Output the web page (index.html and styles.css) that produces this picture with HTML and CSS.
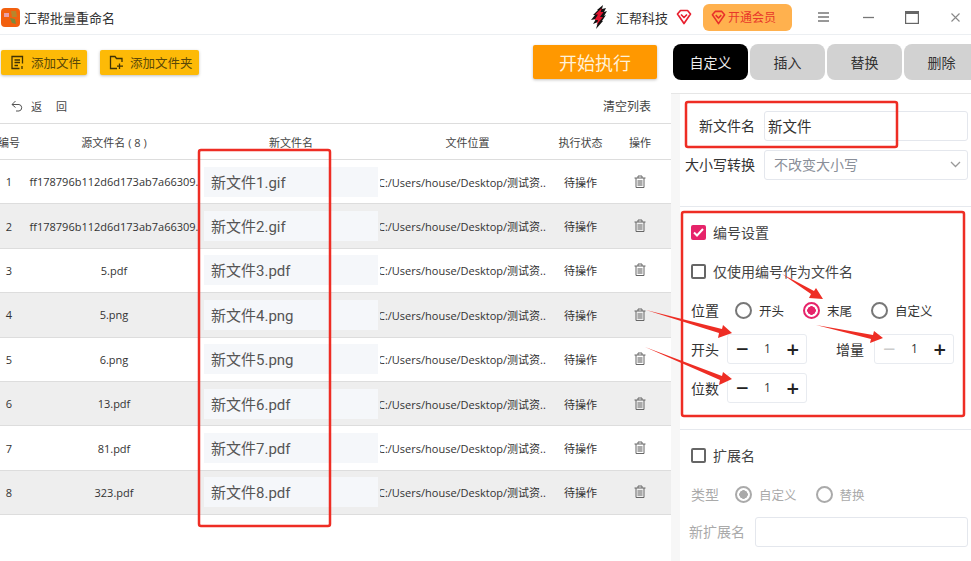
FILE: index.html

```html
<!DOCTYPE html>
<html lang="zh-CN">
<head>
  <meta charset="UTF-8">
  <title>汇帮批量重命名</title>
  <link rel="stylesheet" href="styles.css">
</head>
<body>
  <div class="app">
    <header class="titlebar">
      <div class="app-name">
        <svg class="app-logo" width="19" height="19" viewBox="0 0 19 19"><rect width="19" height="19" rx="4" fill="#f2600f"/><path d="M3 5h5v4H3z" fill="#e8a0a8"/><path d="M10 3h5l1 6h-5z" fill="#b8862c"/><path d="M9 10l5 1 1 5-4-1z" fill="#7d8a3a"/></svg>
        <span>汇帮批量重命名</span>
      </div>
      <div class="title-right">
        <svg class="brand-mark" width="16" height="24" viewBox="0 0 16 24"><path d="M12 0l-1 4 4-1-2 4 3-1-3 5 2-1-4 6 1 0-7 8 2-7-5 2 3-5-5 1 4-5-2 0 5-5-1 0z" fill="#111"/><path d="M11 3L4 9.500h3L3.500 15H7l-1.500 5L12 12H9l3.500-5H9.500z" fill="#e2132e"/></svg>
        <span class="brand-name">汇帮科技</span>
        <svg class="gem" width="16" height="16" viewBox="0 0 16 16"><path d="M4.500 1.500h7l3 3.500L8 14.500 1.500 5z M5 5.500l3 3 3-3" fill="none" stroke="#e8202f" stroke-width="1.700" stroke-linejoin="round"/></svg>
        <div class="vip-btn">
          <svg width="15" height="15" viewBox="0 0 16 16"><path d="M4.500 1.500h7l3 3.500L8 14.500 1.500 5z M5 5.500l3 3 3-3" fill="none" stroke="#e8302a" stroke-width="1.700" stroke-linejoin="round"/></svg>
          <span>开通会员</span>
        </div>
        <svg class="win-icon menu-icon" width="12" height="10" viewBox="0 0 12 10"><path d="M0 1h11M0 5h11M0 9h11" stroke="#777" stroke-width="1.300"/></svg>
        <svg class="win-icon min-icon" width="11" height="10" viewBox="0 0 11 10"><path d="M0 5.500h11" stroke="#777" stroke-width="1.300"/></svg>
        <svg class="win-icon max-icon" width="14" height="13" viewBox="0 0 14 13"><rect x=".6" y=".6" width="12.800" height="11.800" fill="none" stroke="#666" stroke-width="1.200"/><rect x="0" y="0" width="14" height="3" fill="#666"/></svg>
        <svg class="win-icon close-icon" width="9" height="9" viewBox="0 0 9 9"><path d="M.5.500l8 8M8.500.500l-8 8" stroke="#888" stroke-width="1.100"/></svg>
      </div>
    </header>

    <div class="main">
      <section class="left-pane">
        <div class="toolbar">
          <button class="add-btn add-file">
            <svg width="15" height="15" viewBox="0 0 15 15"><path d="M12.500 8.500V1.500H2v12h7.500M4.500 5h5.500M4.500 7.500h5.500M4.500 10.500h3.500M12 11v3" fill="none" stroke="#3f3205" stroke-width="1.300"/></svg>
            <span>添加文件</span>
          </button>
          <button class="add-btn add-folder">
            <svg width="15" height="15" viewBox="0 0 15 15"><path d="M8 13.500H1.500v-12h4.500l1.500 2h5.500v3.500M10.500 8.500v5.500M8 11.200h6" fill="none" stroke="#3f3205" stroke-width="1.300"/></svg>
            <span>添加文件夹</span>
          </button>
          <button class="start-btn">开始执行</button>
        </div>

        <div class="list-bar">
          <div class="back-link">
            <svg width="13" height="12" viewBox="0 0 13 12"><path d="M4.500 1L1 4.500l3.500 3M1 4.500h7a3.300 3.300 0 0 1 0 6.500H5" fill="none" stroke="#555" stroke-width="1"/></svg>
            <span class="back-a">返</span><span>回</span>
          </div>
          <span class="clear-link">清空列表</span>
        </div>

        <div class="table">
          <div class="row head">
            <div class="c-num">编号</div>
            <div class="c-src">源文件名 ( 8 )</div>
            <div class="c-new">新文件名</div>
            <div class="c-path">文件位置</div>
            <div class="c-state">执行状态</div>
            <div class="c-op">操作</div>
          </div>
          <div class="row">
            <div class="c-num">1</div><div class="c-src">ff178796b112d6d173ab7a66309.</div>
            <div class="c-new"><div class="name-input">新文件1.gif</div></div>
            <div class="c-path"><span>C:/Users/house/Desktop/测试资..</span></div><div class="c-state">待操作</div>
            <div class="c-op"><svg class="trash" width="12" height="14" viewBox="0 0 12 14"><path d="M.5 3h11M4 3V1h4v2M2 3v9.500h8V3" fill="none" stroke="#666" stroke-width="1"/><rect x="3.500" y="5" width="5" height="6" fill="#aaa"/></svg></div>
          </div>
          <div class="row">
            <div class="c-num">2</div><div class="c-src">ff178796b112d6d173ab7a66309.</div>
            <div class="c-new"><div class="name-input">新文件2.gif</div></div>
            <div class="c-path"><span>C:/Users/house/Desktop/测试资..</span></div><div class="c-state">待操作</div>
            <div class="c-op"><svg class="trash" width="12" height="14" viewBox="0 0 12 14"><path d="M.5 3h11M4 3V1h4v2M2 3v9.500h8V3" fill="none" stroke="#666" stroke-width="1"/><rect x="3.500" y="5" width="5" height="6" fill="#aaa"/></svg></div>
          </div>
          <div class="row">
            <div class="c-num">3</div><div class="c-src">5.pdf</div>
            <div class="c-new"><div class="name-input">新文件3.pdf</div></div>
            <div class="c-path"><span>C:/Users/house/Desktop/测试资..</span></div><div class="c-state">待操作</div>
            <div class="c-op"><svg class="trash" width="12" height="14" viewBox="0 0 12 14"><path d="M.5 3h11M4 3V1h4v2M2 3v9.500h8V3" fill="none" stroke="#666" stroke-width="1"/><rect x="3.500" y="5" width="5" height="6" fill="#aaa"/></svg></div>
          </div>
          <div class="row">
            <div class="c-num">4</div><div class="c-src">5.png</div>
            <div class="c-new"><div class="name-input">新文件4.png</div></div>
            <div class="c-path"><span>C:/Users/house/Desktop/测试资..</span></div><div class="c-state">待操作</div>
            <div class="c-op"><svg class="trash" width="12" height="14" viewBox="0 0 12 14"><path d="M.5 3h11M4 3V1h4v2M2 3v9.500h8V3" fill="none" stroke="#666" stroke-width="1"/><rect x="3.500" y="5" width="5" height="6" fill="#aaa"/></svg></div>
          </div>
          <div class="row">
            <div class="c-num">5</div><div class="c-src">6.png</div>
            <div class="c-new"><div class="name-input">新文件5.png</div></div>
            <div class="c-path"><span>C:/Users/house/Desktop/测试资..</span></div><div class="c-state">待操作</div>
            <div class="c-op"><svg class="trash" width="12" height="14" viewBox="0 0 12 14"><path d="M.5 3h11M4 3V1h4v2M2 3v9.500h8V3" fill="none" stroke="#666" stroke-width="1"/><rect x="3.500" y="5" width="5" height="6" fill="#aaa"/></svg></div>
          </div>
          <div class="row">
            <div class="c-num">6</div><div class="c-src">13.pdf</div>
            <div class="c-new"><div class="name-input">新文件6.pdf</div></div>
            <div class="c-path"><span>C:/Users/house/Desktop/测试资..</span></div><div class="c-state">待操作</div>
            <div class="c-op"><svg class="trash" width="12" height="14" viewBox="0 0 12 14"><path d="M.5 3h11M4 3V1h4v2M2 3v9.500h8V3" fill="none" stroke="#666" stroke-width="1"/><rect x="3.500" y="5" width="5" height="6" fill="#aaa"/></svg></div>
          </div>
          <div class="row">
            <div class="c-num">7</div><div class="c-src">81.pdf</div>
            <div class="c-new"><div class="name-input">新文件7.pdf</div></div>
            <div class="c-path"><span>C:/Users/house/Desktop/测试资..</span></div><div class="c-state">待操作</div>
            <div class="c-op"><svg class="trash" width="12" height="14" viewBox="0 0 12 14"><path d="M.5 3h11M4 3V1h4v2M2 3v9.500h8V3" fill="none" stroke="#666" stroke-width="1"/><rect x="3.500" y="5" width="5" height="6" fill="#aaa"/></svg></div>
          </div>
          <div class="row">
            <div class="c-num">8</div><div class="c-src">323.pdf</div>
            <div class="c-new"><div class="name-input">新文件8.pdf</div></div>
            <div class="c-path"><span>C:/Users/house/Desktop/测试资..</span></div><div class="c-state">待操作</div>
            <div class="c-op"><svg class="trash" width="12" height="14" viewBox="0 0 12 14"><path d="M.5 3h11M4 3V1h4v2M2 3v9.500h8V3" fill="none" stroke="#666" stroke-width="1"/><rect x="3.500" y="5" width="5" height="6" fill="#aaa"/></svg></div>
          </div>
        </div>
      </section>

      <aside class="right-pane">
        <div class="tabs">
          <div class="tab active">自定义</div>
          <div class="tab">插入</div>
          <div class="tab">替换</div>
          <div class="tab">删除</div>
        </div>

        <div class="panel">
          <div class="section name-section">
            <div class="field name-field">
              <label class="field-label">新文件名</label>
              <div class="text-box dark">新文件</div>
            </div>
            <div class="field case-field">
              <label class="field-label">大小写转换</label>
              <div class="text-box muted">不改变大小写
                <svg width="11" height="7" viewBox="0 0 11 7"><path d="M1 1l4.500 4.500L10 1" fill="none" stroke="#999" stroke-width="1.300"/></svg>
              </div>
            </div>
          </div>

          <div class="section number-section">
            <div class="check-row first">
              <span class="checkbox on"><svg width="11" height="9" viewBox="0 0 11 9"><path d="M1 4.500l3 3L10 1" fill="none" stroke="#fff" stroke-width="2"/></svg></span>
              <span>编号设置</span>
            </div>
            <div class="check-row second">
              <span class="checkbox"></span>
              <span>仅使用编号作为文件名</span>
            </div>
            <div class="radio-row">
              <span class="row-label">位置</span>
              <span class="radio"></span><span class="radio-text">开头</span>
              <span class="radio on"></span><span class="radio-text">末尾</span>
              <span class="radio"></span><span class="radio-text">自定义</span>
            </div>
            <div class="step-row">
              <span class="row-label">开头</span>
              <div class="stepper"><span class="sign">−</span><span>1</span><span class="sign">+</span></div>
              <span class="row-label inc-label">增量</span>
              <div class="stepper"><span class="sign off">−</span><span>1</span><span class="sign">+</span></div>
            </div>
            <div class="step-row">
              <span class="row-label">位数</span>
              <div class="stepper"><span class="sign">−</span><span>1</span><span class="sign">+</span></div>
            </div>
          </div>

          <div class="section ext-section">
            <div class="check-row first">
              <span class="checkbox"></span>
              <span>扩展名</span>
            </div>
            <div class="radio-row faded">
              <span class="row-label">类型</span>
              <span class="radio on"></span><span class="radio-text">自定义</span>
              <span class="radio"></span><span class="radio-text">替换</span>
            </div>
            <div class="field ext-field">
              <label class="field-label">新扩展名</label>
              <div class="text-box"></div>
            </div>
          </div>
        </div>
      </aside>
    </div>

    <!-- red marks drawn on top of the screenshot -->
    <svg class="marks" width="971" height="561" viewBox="0 0 971 561">
      <g fill="none" stroke="#ee2d24" stroke-width="2.500">
        <rect x="199" y="150" width="131" height="376" rx="2"/>
        <rect x="686" y="102" width="211" height="45" rx="2"/>
        <rect x="682" y="212" width="282" height="204" rx="2"/>
      </g>
      <g fill="#ee2d24">
        <path d="M782 274L814 291 816 288 823 299 809 298 811 294z"/>
        <path d="M646 310L722 329 723 325 732 333 718 338 719 333z"/>
        <path d="M645 347L722 376 723 372 732 379 719 385 720 380z"/>
        <path d="M816 325L873 335 874 331 883 338 870 343 871 339z"/>
      </g>
    </svg>
  </div>
</body>
</html>
```

FILE: styles.css

```css
* {
  box-sizing: border-box;
}

html,
body {
  margin: 0;
  height: 100%;
  overflow: hidden;
}

body {
  font-family: "Open Sans", "Noto Sans CJK SC", sans-serif;
  font-size: 12px;
  color: #333;
  background-color: #fff;
}

.app {
  position: relative;
  width: 971px;
  height: 561px;
  overflow: hidden;
}

.titlebar {
  display: flex;
  justify-content: space-between;
  align-items: center;
  height: 35px;
  border-bottom: 1px solid #eceff2;
}

.app-name {
  display: flex;
  align-items: center;
  gap: 4px;
  padding-left: 1px;
  font-size: 13px;
  color: #333;
}

.title-right {
  display: flex;
  align-items: center;
  height: 100%;
  font-size: 13px;
}

.brand-name {
  margin-left: 9px;
}

.gem {
  margin-left: 8px;
}

.vip-btn {
  display: flex;
  align-items: center;
  gap: 2px;
  width: 89px;
  height: 27px;
  margin-left: 11px;
  padding-left: 8px;
  border-radius: 6px;
  background-color: #ffb14e;
  color: #e8382a;
  font-size: 12px;
}

.menu-icon {
  margin-left: 26px;
}

.min-icon {
  margin-left: 33px;
}

.max-icon {
  margin-left: 31px;
}

.close-icon {
  margin-left: 32px;
  margin-right: 11px;
}

.main {
  display: flex;
  height: 526px;
}

.left-pane {
  width: 671px;
  flex-shrink: 0;
}

.toolbar {
  display: flex;
  align-items: center;
  height: 58px;
  padding-left: 1px;
}

.add-btn {
  display: flex;
  align-items: center;
  gap: 6px;
  height: 25px;
  margin-top: -4px;
  padding: 0 0 0 9px;
  border: none;
  border-radius: 2px;
  background-color: #fdba07;
  color: #5a4708;
  font-family: inherit;
  font-size: 12.500px;
  box-shadow: 0 1px 3px rgba(0, 0, 0, 0.25);
}

.add-file {
  width: 86px;
}

.add-folder {
  width: 99px;
  margin-left: 13px;
}

.start-btn {
  width: 124px;
  height: 34px;
  margin-left: auto;
  margin-right: 14px;
  margin-top: -4px;
  border: none;
  border-radius: 2px;
  background-color: #ff9800;
  color: #fff1d8;
  font-family: inherit;
  font-size: 18px;
  box-shadow: 0 1px 3px rgba(0, 0, 0, 0.25);
}

.list-bar {
  display: flex;
  justify-content: space-between;
  align-items: center;
  height: 31px;
  padding: 0 20px 4px 11px;
  border-bottom: 1px solid #ddd;
  font-size: 11px;
  color: #444;
}

.clear-link {
  font-size: 12px;
}

.back-link {
  display: flex;
  align-items: center;
}

.back-a {
  margin-left: 7px;
  margin-right: 14px;
}

.row {
  display: grid;
  grid-template-columns: 18px 184px 178px 175px 51px 65px;
  align-items: center;
  height: 44.400px;
  border-bottom: 1px solid #ddd;
  font-size: 11px;
  color: #333;
}

.row:nth-child(odd) {
  background-color: #eeeeee;
}

.row.head {
  height: 36px;
  background-color: #fff;
  color: #444;
}

.row > div {
  text-align: center;
  white-space: nowrap;
}

.head .c-num {
  margin-left: -2px;
}

.c-src {
  padding-left: 8px;
}

.row .c-new {
  padding: 0 2px;
}

.name-input {
  display: flex;
  align-items: center;
  height: 30px;
  padding: 0 0 1px 7px;
  background-color: #f5f7fa;
  font-family: Roboto, "Noto Sans CJK SC", sans-serif;
  font-size: 15px;
  color: #555;
}

.row .c-path {
  overflow: hidden;
  text-align: left;
}

.c-path span {
  display: inline-block;
  margin-left: -2px;
  font-size: 11px;
}

.row.head .c-path {
  text-align: center;
}

.c-op {
  padding-left: 3px;
}

.trash {
  display: block;
  margin: 0 auto;
}

.right-pane {
  flex: 1;
  min-width: 0;
}

.tabs {
  display: flex;
  gap: 2px;
  height: 58px;
  padding: 9px 0 0 2px;
}

.tab {
  display: flex;
  align-items: center;
  justify-content: center;
  flex-shrink: 0;
  width: 75px;
  height: 36px;
  padding-bottom: 1px;
  border-radius: 8px;
  background-color: #d2d2d2;
  color: #333;
  font-size: 14px;
}

.tab.active {
  background-color: #000;
  color: #eee;
}

.panel {
  height: 468px;
  padding-left: 9px;
  border-top: 1px solid #e6e6e6;
  background-color: #f7f7f7;
}

.section {
  background-color: #fff;
  border-bottom: 1px solid #e6e9ee;
}

.name-section {
  height: 113px;
  padding-top: 17px;
}

.number-section {
  height: 223px;
  padding: 15px 0 0 11px;
}

.ext-section {
  height: 132px;
  padding: 15px 0 0 11px;
  border-bottom: none;
}

.field {
  display: flex;
  align-items: center;
  height: 30px;
}

.field-label {
  padding-bottom: 2px;
  text-align: right;
  font-size: 14px;
  color: #333;
}

.name-field .field-label,
.case-field .field-label {
  width: 75px;
  margin-right: 9px;
  white-space: nowrap;
}

.case-field {
  margin-top: 9px;
}

.text-box {
  display: flex;
  align-items: center;
  justify-content: space-between;
  flex: 1;
  height: 30px;
  margin-right: 3px;
  padding: 0 6px 2px 3px;
  border: 1px solid #e4e7ed;
  border-radius: 3px;
  font-size: 14.500px;
}

.text-box.muted {
  padding-left: 9px;
  font-size: 14px;
  color: #8a8f99;
}

.check-row {
  display: flex;
  align-items: center;
  gap: 7px;
  height: 20px;
  font-size: 14px;
  color: #444;
}

.check-row.second {
  margin-top: 19px;
}

.checkbox {
  display: flex;
  align-items: center;
  justify-content: center;
  width: 15px;
  height: 15px;
  border: 2px solid #666;
  border-radius: 2px;
}

.checkbox.on {
  border: none;
  background-color: #e6246a;
}

.radio-row {
  display: flex;
  align-items: center;
  height: 20px;
  margin-top: 19px;
  color: #333;
}

.row-label {
  width: 28px;
  font-size: 14px;
  color: #333;
}

.radio {
  width: 17px;
  height: 17px;
  margin-left: 16px;
  border: 2px solid #777;
  border-radius: 50%;
  background-color: #fff;
}

.radio.on {
  border-color: #e6246a;
  background: radial-gradient(circle, #e6246a 0 4px, #fff 4.500px);
}

.radio + .radio-text {
  margin-left: 7px;
  margin-right: 3px;
  font-size: 12.500px;
}

.radio-row.faded .row-label,
.radio-row.faded .radio-text {
  color: #aaa;
}

.radio-row.faded .radio {
  border-color: #aaa;
}

.radio-row.faded .radio.on {
  background: radial-gradient(circle, #aaa 0 4px, #fff 4.500px);
}

.step-row {
  display: flex;
  align-items: center;
  height: 30px;
  margin-top: 9px;
}

.radio-row + .step-row {
  margin-top: 14px;
}

.stepper {
  display: flex;
  justify-content: space-between;
  align-items: center;
  width: 80px;
  height: 30px;
  margin-left: 8px;
  padding: 0 7px 2px 8px;
  border: 1px solid #e8ebf0;
  border-radius: 3px;
  font-size: 12px;
  color: #333;
}

.stepper .sign {
  font-size: 22px;
  font-weight: 600;
  line-height: 1;
  color: #222;
}

.stepper .sign.off {
  font-weight: 400;
  color: #ccc;
}

.inc-label {
  width: 30px;
  margin-left: 29px;
}

.ext-field {
  margin-top: 13px;
}

.ext-field .field-label {
  margin-left: -2px;
  margin-right: 10px;
  white-space: nowrap;
  color: #aaa;
}

.marks {
  position: absolute;
  left: 0;
  top: 0;
  pointer-events: none;
}
```
